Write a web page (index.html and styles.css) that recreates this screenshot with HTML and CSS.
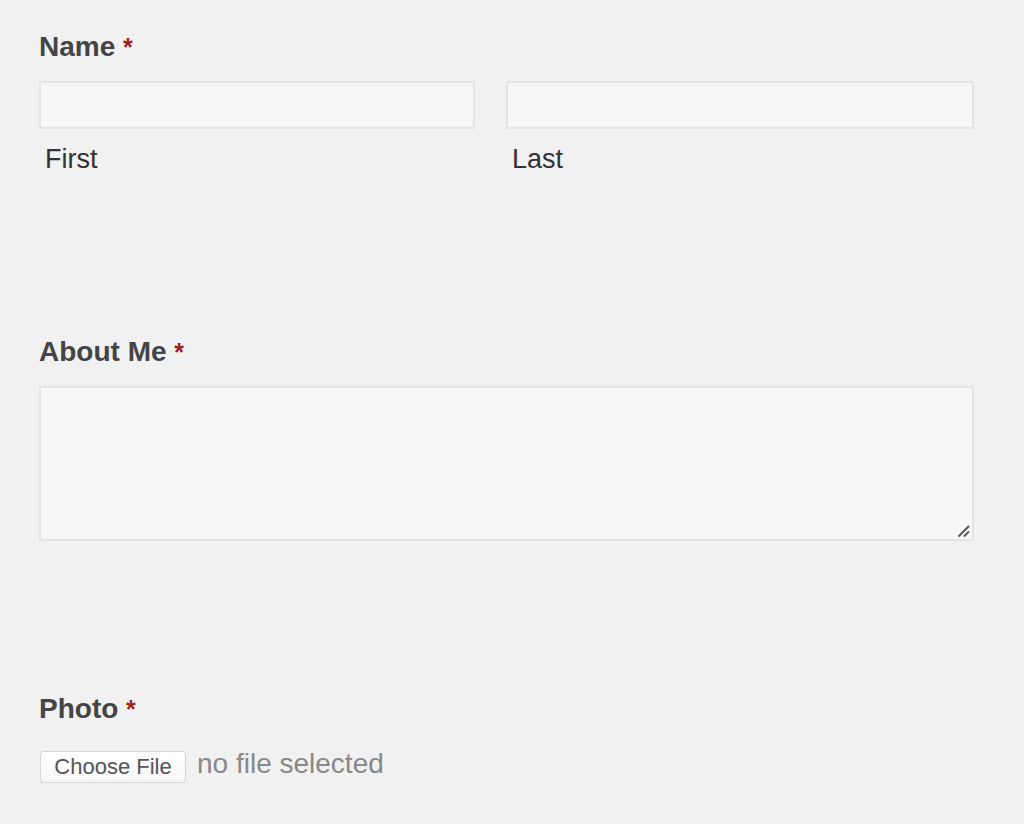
FILE: index.html
```html
<!DOCTYPE html>
<html lang="en">
<head>
  <meta charset="UTF-8">
  <title>Profile Form</title>
  <link rel="stylesheet" href="styles.css">
</head>
<body>
  <form class="form">
    <div class="field field-name">
      <label class="field-label">Name <span class="required">*</span></label>
      <div class="name-row">
        <div class="name-part">
          <input class="text-input" type="text">
          <span class="sub-label">First</span>
        </div>
        <div class="name-part">
          <input class="text-input" type="text">
          <span class="sub-label">Last</span>
        </div>
      </div>
    </div>

    <div class="field field-about">
      <label class="field-label">About Me <span class="required">*</span></label>
      <div class="textarea-wrap">
        <textarea class="text-area"></textarea>
        <svg class="resize-grip" width="14" height="14" viewBox="0 0 14 14">
          <line x1="1.5" y1="12.5" x2="12" y2="2" stroke="#555" stroke-width="2"/>
          <line x1="7" y1="12.5" x2="12" y2="7.5" stroke="#555" stroke-width="2"/>
        </svg>
      </div>
    </div>

    <div class="field field-photo">
      <label class="field-label">Photo <span class="required">*</span></label>
      <div class="file-row">
        <button class="file-button" type="button">Choose File</button>
        <span class="file-status">no file selected</span>
      </div>
    </div>
  </form>
</body>
</html>
```

FILE: styles.css
```css
body {
  margin: 0;
  background: #f1f1f1;
  font-family: 'Liberation Sans', Arial, sans-serif;
  color: #3c3c3c;
}
.form {
  width: 935px;
  padding: 31px 0 0 39px;
}
.field-label {
  display: block;
  font-size: 28px;
  line-height: 32px;
  font-weight: bold;
  color: #444;
  margin-bottom: 18px;
}
.required {
  color: #9b2222;
  font-size: 25px;
}
.name-row {
  display: grid;
  grid-template-columns: 436px 468px;
  column-gap: 31px;
}
.name-part {
  display: flex;
  flex-direction: column;
}
.text-input {
  box-sizing: border-box;
  height: 48px;
  width: 100%;
  margin: 0;
  border: 2px solid #e4e4e4;
  background: #f7f7f7;
  outline: none;
}
.sub-label {
  font-size: 27px;
  line-height: 30px;
  color: #333;
  margin: 15px 0 0 6px;
}
.field-about {
  margin-top: 162px;
}
.textarea-wrap {
  position: relative;
  width: 935px;
  height: 155px;
}
.text-area {
  display: block;
  box-sizing: border-box;
  width: 100%;
  height: 100%;
  margin: 0;
  border: 2px solid #e4e4e4;
  background: #f7f7f7;
  resize: none;
  outline: none;
}
.resize-grip {
  position: absolute;
  right: 3px;
  bottom: 3px;
}
.field-photo {
  margin-top: 152px;
}
.field-photo .field-label {
  margin-bottom: 26px;
}
.file-row {
  display: flex;
  align-items: center;
  gap: 11px;
  margin-left: 1px;
}
.file-button {
  box-sizing: border-box;
  width: 146px;
  height: 32px;
  padding: 0;
  border: 1px solid #d6d6d6;
  border-radius: 4px;
  background: linear-gradient(#ffffff, #f6f6f6);
  font-family: 'Liberation Sans', Arial, sans-serif;
  font-size: 22px;
  color: #555;
  box-shadow: 0 1px 1px rgba(0, 0, 0, 0.06);
}
.file-status {
  font-size: 28px;
  color: #888;
  margin-top: -6px;
}
```
